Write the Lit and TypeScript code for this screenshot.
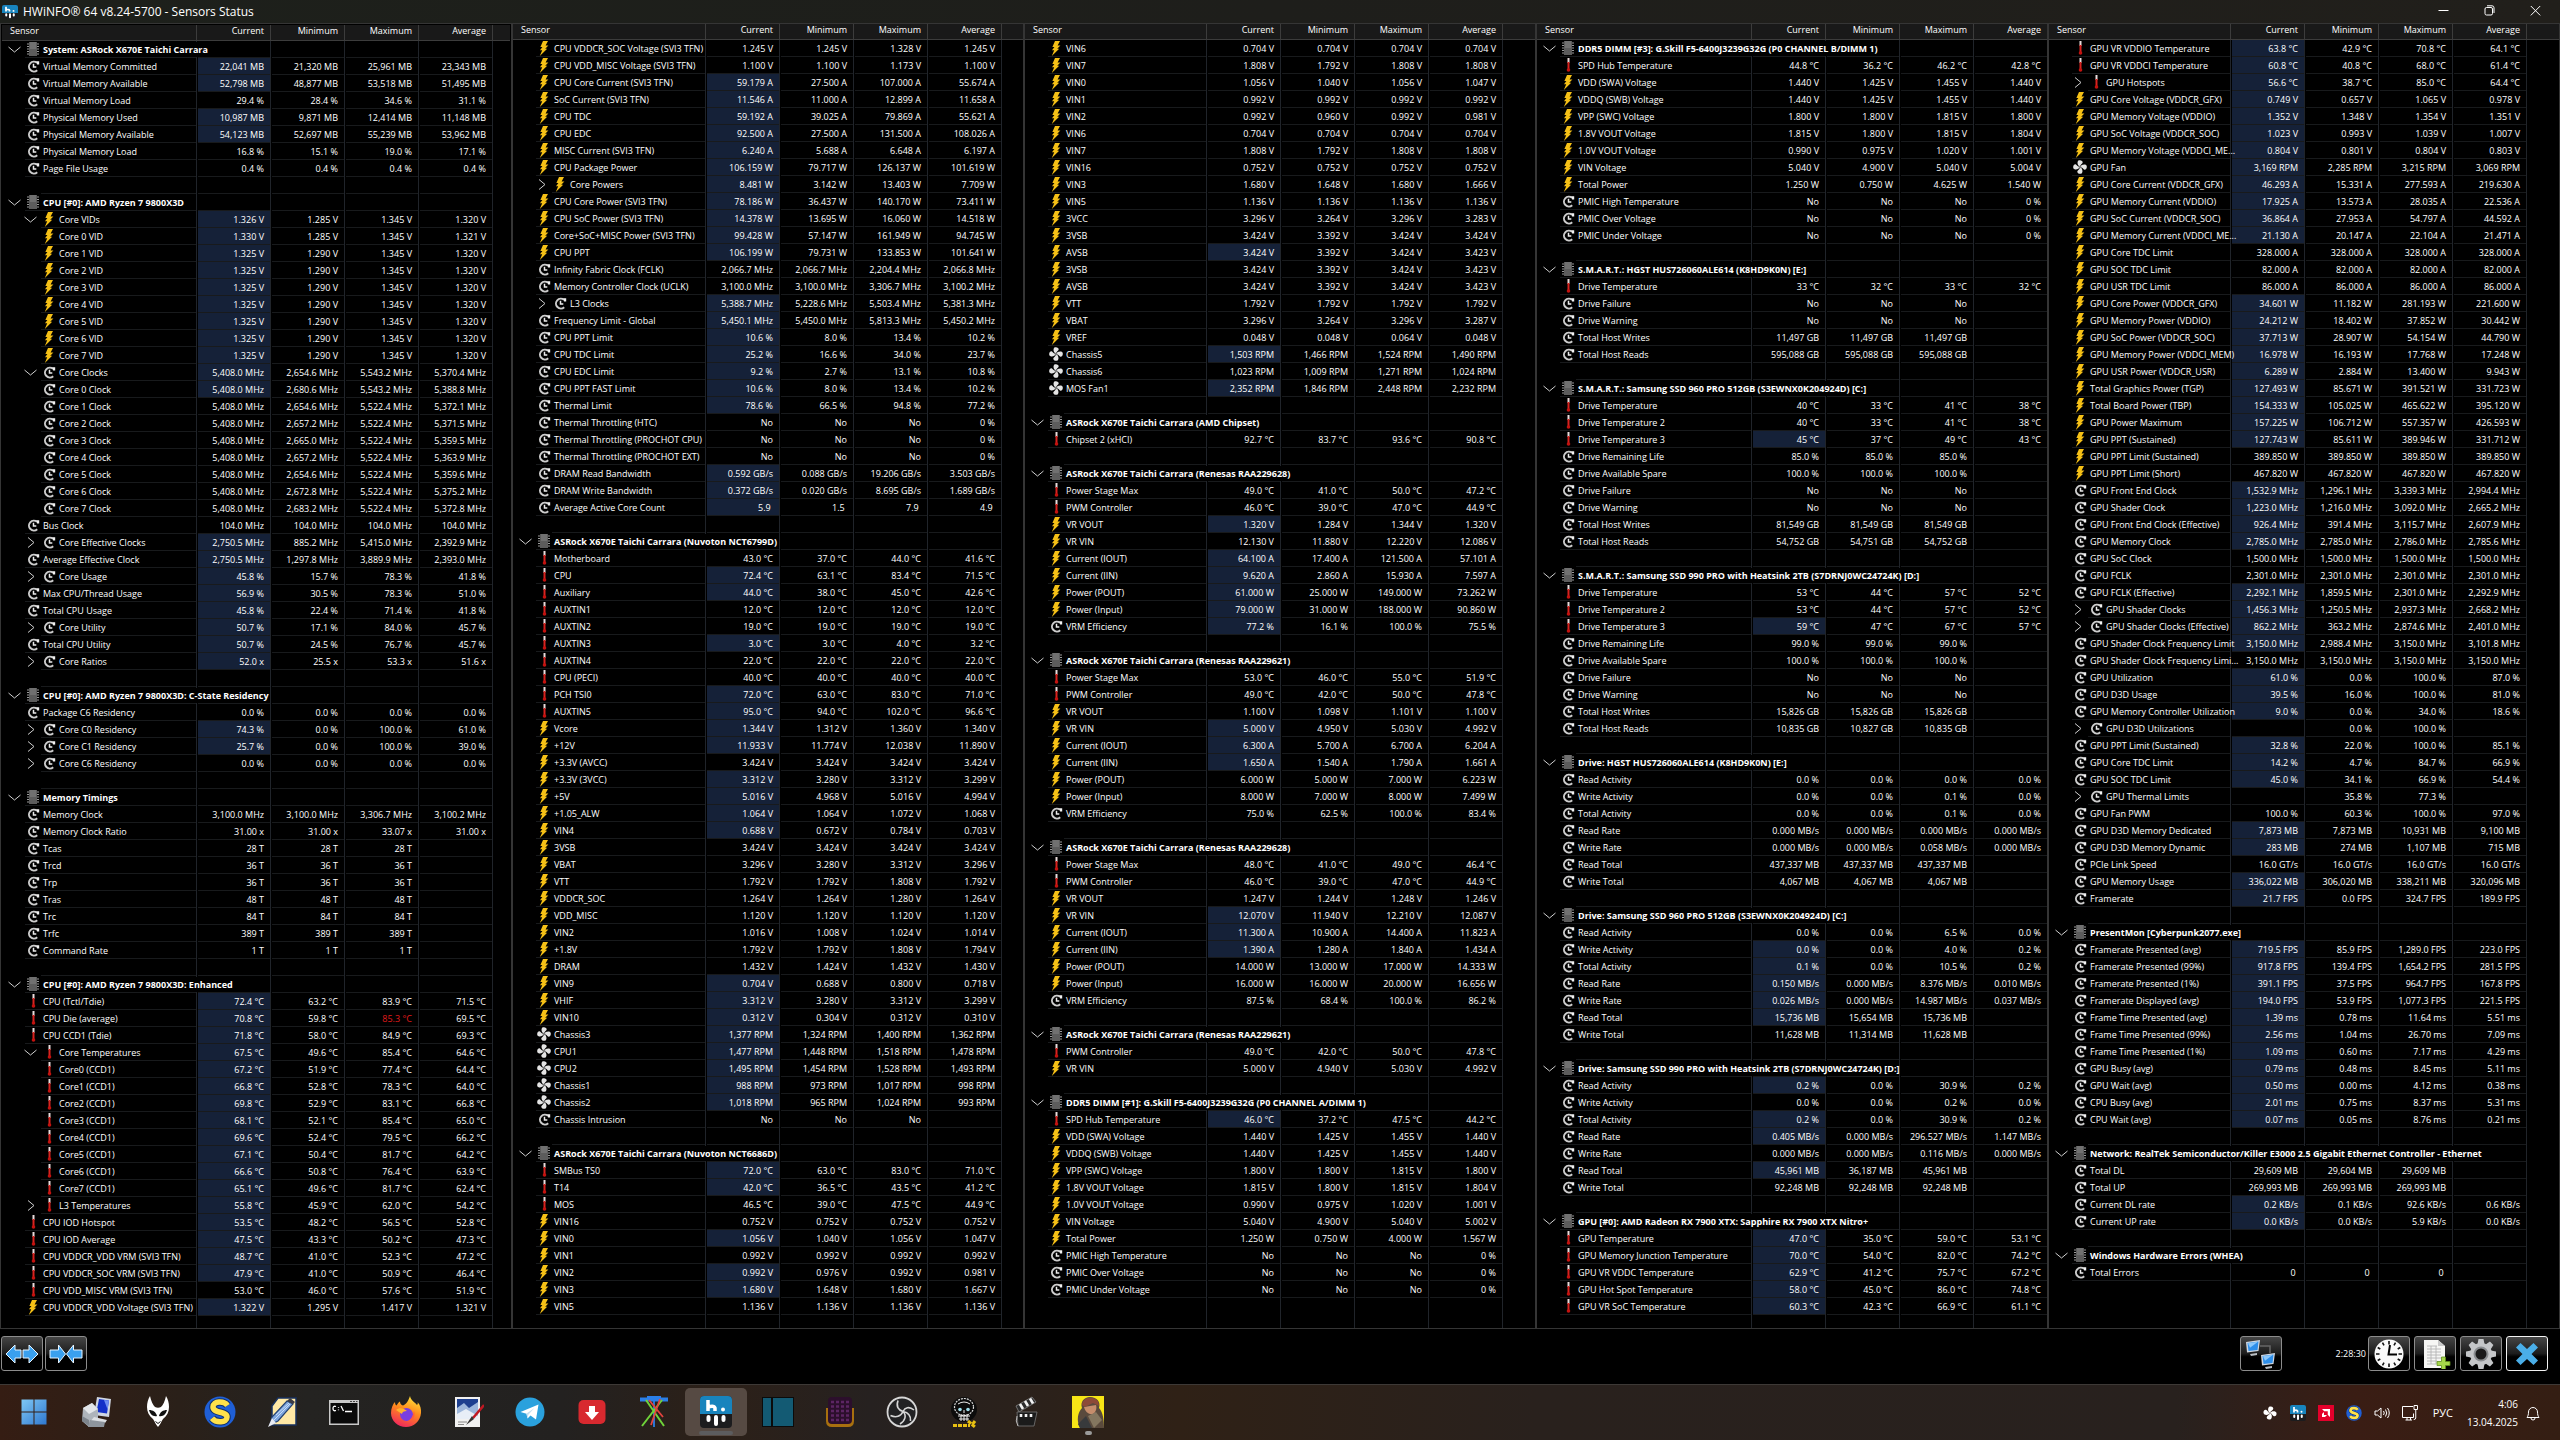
import { LitElement, html, css, svg, nothing, TemplateResult } from "lit";
import { customElement, property } from "lit/decorators.js";
import { classMap } from "lit/directives/class-map.js";

/* ---------------------------------------------------------------- data --
 * One reading per line:  kind|name|current minimum maximum average|unit
 * kind: c clock, b bolt, t thermometer, f fan
 *       * value changed since last poll, > collapsed group, < open group,
 *       - member of a group, ! maximum is over the limit
 * A line that starts with # opens a section.
 */
interface Reading {
  icon: string;
  changed: boolean;
  group: "" | "open" | "closed";
  nested: boolean;
  alert: boolean;
  name: string;
  values: string[];
}
interface Section {
  title: string;
  readings: Reading[];
}

const withUnit = (v: string, unit: string): string => {
  if (v === "-") return "";
  if (v === "No") return v;
  if (v.endsWith("%")) return v.slice(0, -1) + " %";
  return unit ? `${v} ${unit}` : `${v}\u00a0`;
};

const parse = (source: string): Section[] => {
  const out: Section[] = [];
  for (const line of source.trim().split("\n")) {
    if (line.startsWith("#")) {
      out.push({ title: line.slice(1), readings: [] });
      continue;
    }
    if (!out.length) out.push({ title: "", readings: [] });
    const [kind, name, values, unit = ""] = line.split("|");
    out[out.length - 1].readings.push({
      icon: kind[0],
      changed: kind.includes("*"),
      group: kind.includes(">") ? "closed" : kind.includes("<") ? "open" : "",
      nested: /[<>-]/.test(kind),
      alert: kind.includes("!"),
      name,
      values: values.split(" ").map((v) => withUnit(v, unit)),
    });
  }
  return out;
};

const PANELS: { width: number; sections: Section[] }[] = [
  {
    width: 194,
    sections: parse(`
#System: ASRock X670E Taichi Carrara
c*|Virtual Memory Committed|22,041 21,320 25,961 23,343|MB
c*|Virtual Memory Available|52,798 48,877 53,518 51,495|MB
c|Virtual Memory Load|29.4 28.4 34.6 31.1|%
c*|Physical Memory Used|10,987 9,871 12,414 11,148|MB
c*|Physical Memory Available|54,123 52,697 55,239 53,962|MB
c|Physical Memory Load|16.8 15.1 19.0 17.1|%
c|Page File Usage|0.4 0.4 0.4 0.4|%
#CPU [#0]: AMD Ryzen 7 9800X3D
b*<|Core VIDs|1.326 1.285 1.345 1.320|V
b*-|Core 0 VID|1.330 1.285 1.345 1.321|V
b*-|Core 1 VID|1.325 1.290 1.345 1.320|V
b*-|Core 2 VID|1.325 1.290 1.345 1.320|V
b*-|Core 3 VID|1.325 1.290 1.345 1.320|V
b*-|Core 4 VID|1.325 1.290 1.345 1.320|V
b*-|Core 5 VID|1.325 1.290 1.345 1.320|V
b*-|Core 6 VID|1.325 1.290 1.345 1.320|V
b*-|Core 7 VID|1.325 1.290 1.345 1.320|V
c*<|Core Clocks|5,408.0 2,654.6 5,543.2 5,370.4|MHz
c*-|Core 0 Clock|5,408.0 2,680.6 5,543.2 5,388.8|MHz
c-|Core 1 Clock|5,408.0 2,654.6 5,522.4 5,372.1|MHz
c-|Core 2 Clock|5,408.0 2,657.2 5,522.4 5,371.5|MHz
c-|Core 3 Clock|5,408.0 2,665.0 5,522.4 5,359.5|MHz
c-|Core 4 Clock|5,408.0 2,657.2 5,522.4 5,363.9|MHz
c-|Core 5 Clock|5,408.0 2,654.6 5,522.4 5,359.6|MHz
c-|Core 6 Clock|5,408.0 2,672.8 5,522.4 5,375.2|MHz
c-|Core 7 Clock|5,408.0 2,683.2 5,522.4 5,372.8|MHz
c|Bus Clock|104.0 104.0 104.0 104.0|MHz
c*>|Core Effective Clocks|2,750.5 885.2 5,415.0 2,392.9|MHz
c*|Average Effective Clock|2,750.5 1,297.8 3,889.9 2,393.0|MHz
c*>|Core Usage|45.8 15.7 78.3 41.8|%
c*|Max CPU/Thread Usage|56.9 30.5 78.3 51.0|%
c*|Total CPU Usage|45.8 22.4 71.4 41.8|%
c*>|Core Utility|50.7 17.1 84.0 45.7|%
c*|Total CPU Utility|50.7 24.5 76.7 45.7|%
c*>|Core Ratios|52.0 25.5 53.3 51.6|x
#CPU [#0]: AMD Ryzen 7 9800X3D: C-State Residency
c|Package C6 Residency|0.0 0.0 0.0 0.0|%
c*>|Core C0 Residency|74.3 0.0 100.0 61.0|%
c*>|Core C1 Residency|25.7 0.0 100.0 39.0|%
c>|Core C6 Residency|0.0 0.0 0.0 0.0|%
#Memory Timings
c|Memory Clock|3,100.0 3,100.0 3,306.7 3,100.2|MHz
c|Memory Clock Ratio|31.00 31.00 33.07 31.00|x
c|Tcas|28 28 28 -|T
c|Trcd|36 36 36 -|T
c|Trp|36 36 36 -|T
c|Tras|48 48 48 -|T
c|Trc|84 84 84 -|T
c|Trfc|389 389 389 -|T
c|Command Rate|1 1 1 -|T
#CPU [#0]: AMD Ryzen 7 9800X3D: Enhanced
t*|CPU (Tctl/Tdie)|72.4 63.2 83.9 71.5|°C
t*!|CPU Die (average)|70.8 59.8 85.3 69.5|°C
t*|CPU CCD1 (Tdie)|71.8 58.0 84.9 69.3|°C
t*<|Core Temperatures|67.5 49.6 85.4 64.6|°C
t*-|Core0 (CCD1)|67.2 51.9 77.4 64.4|°C
t*-|Core1 (CCD1)|66.8 52.8 78.3 64.0|°C
t*-|Core2 (CCD1)|69.8 52.9 83.1 66.8|°C
t*-|Core3 (CCD1)|68.1 52.1 85.4 65.0|°C
t*-|Core4 (CCD1)|69.6 52.4 79.5 66.2|°C
t*-|Core5 (CCD1)|67.1 50.4 81.7 64.2|°C
t*-|Core6 (CCD1)|66.6 50.8 76.4 63.9|°C
t*-|Core7 (CCD1)|65.1 49.6 81.7 62.4|°C
t*>|L3 Temperatures|55.8 45.9 62.0 54.2|°C
t*|CPU IOD Hotspot|53.5 48.2 56.5 52.8|°C
t*|CPU IOD Average|47.5 43.3 50.2 47.3|°C
t*|CPU VDDCR_VDD VRM (SVI3 TFN)|48.7 41.0 52.3 47.2|°C
t*|CPU VDDCR_SOC VRM (SVI3 TFN)|47.9 41.0 50.9 46.4|°C
t|CPU VDD_MISC VRM (SVI3 TFN)|53.0 46.0 57.6 51.9|°C
b*|CPU VDDCR_VDD Voltage (SVI3 TFN)|1.322 1.295 1.417 1.321|V
`),
  },
  {
    width: 192,
    sections: parse(`
b|CPU VDDCR_SOC Voltage (SVI3 TFN)|1.245 1.245 1.328 1.245|V
b|CPU VDD_MISC Voltage (SVI3 TFN)|1.100 1.100 1.173 1.100|V
b*|CPU Core Current (SVI3 TFN)|59.179 27.500 107.000 55.674|A
b*|SoC Current (SVI3 TFN)|11.546 11.000 12.899 11.658|A
b*|CPU TDC|59.192 39.025 79.869 55.621|A
b*|CPU EDC|92.500 27.500 131.500 108.026|A
b*|MISC Current (SVI3 TFN)|6.240 5.688 6.648 6.197|A
b*|CPU Package Power|106.159 79.717 126.137 101.619|W
b*>|Core Powers|8.481 3.142 13.403 7.709|W
b*|CPU Core Power (SVI3 TFN)|78.186 36.437 140.170 73.411|W
b*|CPU SoC Power (SVI3 TFN)|14.378 13.695 16.060 14.518|W
b*|Core+SoC+MISC Power (SVI3 TFN)|99.428 57.147 161.949 94.745|W
b*|CPU PPT|106.199 79.731 133.853 101.641|W
c|Infinity Fabric Clock (FCLK)|2,066.7 2,066.7 2,204.4 2,066.8|MHz
c|Memory Controller Clock (UCLK)|3,100.0 3,100.0 3,306.7 3,100.2|MHz
c*>|L3 Clocks|5,388.7 5,228.6 5,503.4 5,381.3|MHz
c*|Frequency Limit - Global|5,450.1 5,450.0 5,813.3 5,450.2|MHz
c*|CPU PPT Limit|10.6 8.0 13.4 10.2|%
c*|CPU TDC Limit|25.2 16.6 34.0 23.7|%
c*|CPU EDC Limit|9.2 2.7 13.1 10.8|%
c*|CPU PPT FAST Limit|10.6 8.0 13.4 10.2|%
c*|Thermal Limit|78.6 66.5 94.8 77.2|%
c|Thermal Throttling (HTC)|No No No 0%
c|Thermal Throttling (PROCHOT CPU)|No No No 0%
c|Thermal Throttling (PROCHOT EXT)|No No No 0%
c*|DRAM Read Bandwidth|0.592 0.088 19.206 3.503|GB/s
c*|DRAM Write Bandwidth|0.372 0.020 8.695 1.689|GB/s
c*|Average Active Core Count|5.9 1.5 7.9 4.9
#ASRock X670E Taichi Carrara (Nuvoton NCT6799D)
t|Motherboard|43.0 37.0 44.0 41.6|°C
t*|CPU|72.4 63.1 83.4 71.5|°C
t*|Auxiliary|44.0 38.0 45.0 42.6|°C
t|AUXTIN1|12.0 12.0 12.0 12.0|°C
t|AUXTIN2|19.0 19.0 19.0 19.0|°C
t*|AUXTIN3|3.0 3.0 4.0 3.2|°C
t|AUXTIN4|22.0 22.0 22.0 22.0|°C
t|CPU (PECI)|40.0 40.0 40.0 40.0|°C
t*|PCH TSI0|72.0 63.0 83.0 71.0|°C
t*|AUXTIN5|95.0 94.0 102.0 96.6|°C
b*|Vcore|1.344 1.312 1.360 1.340|V
b*|+12V|11.933 11.774 12.038 11.890|V
b|+3.3V (AVCC)|3.424 3.424 3.424 3.424|V
b*|+3.3V (3VCC)|3.312 3.280 3.312 3.299|V
b*|+5V|5.016 4.968 5.016 4.994|V
b*|+1.05_ALW|1.064 1.064 1.072 1.068|V
b*|VIN4|0.688 0.672 0.784 0.703|V
b|3VSB|3.424 3.424 3.424 3.424|V
b|VBAT|3.296 3.280 3.312 3.296|V
b|VTT|1.792 1.792 1.808 1.792|V
b|VDDCR_SOC|1.264 1.264 1.280 1.264|V
b|VDD_MISC|1.120 1.120 1.120 1.120|V
b|VIN2|1.016 1.008 1.024 1.014|V
b|+1.8V|1.792 1.792 1.808 1.794|V
b|DRAM|1.432 1.424 1.432 1.430|V
b*|VIN9|0.704 0.688 0.800 0.718|V
b*|VHIF|3.312 3.280 3.312 3.299|V
b*|VIN10|0.312 0.304 0.312 0.310|V
f*|Chassis3|1,377 1,324 1,400 1,362|RPM
f*|CPU1|1,477 1,448 1,518 1,478|RPM
f*|CPU2|1,495 1,454 1,528 1,493|RPM
f*|Chassis1|988 973 1,017 998|RPM
f*|Chassis2|1,018 965 1,024 993|RPM
c|Chassis Intrusion|No No No -
#ASRock X670E Taichi Carrara (Nuvoton NCT6686D)
t*|SMBus TS0|72.0 63.0 83.0 71.0|°C
t*|T14|42.0 36.5 43.5 41.2|°C
t|MOS|46.5 39.0 47.5 44.9|°C
b|VIN16|0.752 0.752 0.752 0.752|V
b*|VIN0|1.056 1.040 1.056 1.047|V
b|VIN1|0.992 0.992 0.992 0.992|V
b*|VIN2|0.992 0.976 0.992 0.981|V
b*|VIN3|1.680 1.648 1.680 1.667|V
b|VIN5|1.136 1.136 1.136 1.136|V
`),
  },
  {
    width: 181,
    sections: parse(`
b|VIN6|0.704 0.704 0.704 0.704|V
b|VIN7|1.808 1.792 1.808 1.808|V
b|VIN0|1.056 1.040 1.056 1.047|V
b|VIN1|0.992 0.992 0.992 0.992|V
b|VIN2|0.992 0.960 0.992 0.981|V
b|VIN6|0.704 0.704 0.704 0.704|V
b|VIN7|1.808 1.792 1.808 1.808|V
b|VIN16|0.752 0.752 0.752 0.752|V
b|VIN3|1.680 1.648 1.680 1.666|V
b|VIN5|1.136 1.136 1.136 1.136|V
b|3VCC|3.296 3.264 3.296 3.283|V
b|3VSB|3.424 3.392 3.424 3.424|V
b*|AVSB|3.424 3.392 3.424 3.423|V
b|3VSB|3.424 3.392 3.424 3.423|V
b|AVSB|3.424 3.392 3.424 3.423|V
b|VTT|1.792 1.792 1.792 1.792|V
b|VBAT|3.296 3.264 3.296 3.287|V
b|VREF|0.048 0.048 0.064 0.048|V
f*|Chassis5|1,503 1,466 1,524 1,490|RPM
f|Chassis6|1,023 1,009 1,271 1,024|RPM
f*|MOS Fan1|2,352 1,846 2,448 2,232|RPM
#ASRock X670E Taichi Carrara (AMD Chipset)
t|Chipset 2 (xHCI)|92.7 83.7 93.6 90.8|°C
#ASRock X670E Taichi Carrara (Renesas RAA229628)
t|Power Stage Max|49.0 41.0 50.0 47.2|°C
t|PWM Controller|46.0 39.0 47.0 44.9|°C
b*|VR VOUT|1.320 1.284 1.344 1.320|V
b|VR VIN|12.130 11.880 12.220 12.086|V
b*|Current (IOUT)|64.100 17.400 121.500 57.101|A
b*|Current (IIN)|9.620 2.860 15.930 7.597|A
b*|Power (POUT)|61.000 25.000 149.000 73.262|W
b*|Power (Input)|79.000 31.000 188.000 90.860|W
c*|VRM Efficiency|77.2 16.1 100.0 75.5|%
#ASRock X670E Taichi Carrara (Renesas RAA229621)
t|Power Stage Max|53.0 46.0 55.0 51.9|°C
t|PWM Controller|49.0 42.0 50.0 47.8|°C
b|VR VOUT|1.100 1.098 1.101 1.100|V
b*|VR VIN|5.000 4.950 5.030 4.992|V
b*|Current (IOUT)|6.300 5.700 6.700 6.204|A
b*|Current (IIN)|1.650 1.540 1.790 1.661|A
b|Power (POUT)|6.000 5.000 7.000 6.223|W
b|Power (Input)|8.000 7.000 8.000 7.499|W
c|VRM Efficiency|75.0 62.5 100.0 83.4|%
#ASRock X670E Taichi Carrara (Renesas RAA229628)
t|Power Stage Max|48.0 41.0 49.0 46.4|°C
t|PWM Controller|46.0 39.0 47.0 44.9|°C
b|VR VOUT|1.247 1.244 1.248 1.246|V
b*|VR VIN|12.070 11.940 12.210 12.087|V
b*|Current (IOUT)|11.300 10.900 14.400 11.823|A
b*|Current (IIN)|1.390 1.280 1.840 1.434|A
b|Power (POUT)|14.000 13.000 17.000 14.333|W
b|Power (Input)|16.000 16.000 20.000 16.656|W
c|VRM Efficiency|87.5 68.4 100.0 86.2|%
#ASRock X670E Taichi Carrara (Renesas RAA229621)
t|PWM Controller|49.0 42.0 50.0 47.8|°C
b|VR VIN|5.000 4.940 5.030 4.992|V
#DDR5 DIMM [#1]: G.Skill F5-6400J3239G32G (P0 CHANNEL A/DIMM 1)
t*|SPD Hub Temperature|46.0 37.2 47.5 44.2|°C
b|VDD (SWA) Voltage|1.440 1.425 1.455 1.440|V
b|VDDQ (SWB) Voltage|1.440 1.425 1.455 1.440|V
b|VPP (SWC) Voltage|1.800 1.800 1.815 1.800|V
b|1.8V VOUT Voltage|1.815 1.800 1.815 1.804|V
b|1.0V VOUT Voltage|0.990 0.975 1.020 1.001|V
b|VIN Voltage|5.040 4.900 5.040 5.002|V
b|Total Power|1.250 0.750 4.000 1.567|W
c|PMIC High Temperature|No No No 0%
c|PMIC Over Voltage|No No No 0%
c|PMIC Under Voltage|No No No 0%
`),
  },
  {
    width: 214,
    sections: parse(`
#DDR5 DIMM [#3]: G.Skill F5-6400J3239G32G (P0 CHANNEL B/DIMM 1)
t|SPD Hub Temperature|44.8 36.2 46.2 42.8|°C
b|VDD (SWA) Voltage|1.440 1.425 1.455 1.440|V
b|VDDQ (SWB) Voltage|1.440 1.425 1.455 1.440|V
b|VPP (SWC) Voltage|1.800 1.800 1.815 1.800|V
b|1.8V VOUT Voltage|1.815 1.800 1.815 1.804|V
b|1.0V VOUT Voltage|0.990 0.975 1.020 1.001|V
b|VIN Voltage|5.040 4.900 5.040 5.004|V
b|Total Power|1.250 0.750 4.625 1.540|W
c|PMIC High Temperature|No No No 0%
c|PMIC Over Voltage|No No No 0%
c|PMIC Under Voltage|No No No 0%
#S.M.A.R.T.: HGST HUS726060ALE614 (K8HD9K0N) [E:]
t|Drive Temperature|33 32 33 32|°C
c|Drive Failure|No No No -
c|Drive Warning|No No No -
c|Total Host Writes|11,497 11,497 11,497 -|GB
c|Total Host Reads|595,088 595,088 595,088 -|GB
#S.M.A.R.T.: Samsung SSD 960 PRO 512GB (S3EWNX0K204924D) [C:]
t|Drive Temperature|40 33 41 38|°C
t|Drive Temperature 2|40 33 41 38|°C
t*|Drive Temperature 3|45 37 49 43|°C
c|Drive Remaining Life|85.0 85.0 85.0 -|%
c|Drive Available Spare|100.0 100.0 100.0 -|%
c|Drive Failure|No No No -
c|Drive Warning|No No No -
c|Total Host Writes|81,549 81,549 81,549 -|GB
c|Total Host Reads|54,752 54,751 54,752 -|GB
#S.M.A.R.T.: Samsung SSD 990 PRO with Heatsink 2TB (S7DRNJ0WC24724K) [D:]
t|Drive Temperature|53 44 57 52|°C
t|Drive Temperature 2|53 44 57 52|°C
t*|Drive Temperature 3|59 47 67 57|°C
c|Drive Remaining Life|99.0 99.0 99.0 -|%
c|Drive Available Spare|100.0 100.0 100.0 -|%
c|Drive Failure|No No No -
c|Drive Warning|No No No -
c|Total Host Writes|15,826 15,826 15,826 -|GB
c|Total Host Reads|10,835 10,827 10,835 -|GB
#Drive: HGST HUS726060ALE614 (K8HD9K0N) [E:]
c|Read Activity|0.0 0.0 0.0 0.0|%
c|Write Activity|0.0 0.0 0.1 0.0|%
c|Total Activity|0.0 0.0 0.1 0.0|%
c|Read Rate|0.000 0.000 0.000 0.000|MB/s
c|Write Rate|0.000 0.000 0.058 0.000|MB/s
c|Read Total|437,337 437,337 437,337 -|MB
c|Write Total|4,067 4,067 4,067 -|MB
#Drive: Samsung SSD 960 PRO 512GB (S3EWNX0K204924D) [C:]
c|Read Activity|0.0 0.0 6.5 0.0|%
c*|Write Activity|0.0 0.0 4.0 0.2|%
c*|Total Activity|0.1 0.0 10.5 0.2|%
c*|Read Rate|0.150 0.000 8.376 0.010|MB/s
c*|Write Rate|0.026 0.000 14.987 0.037|MB/s
c*|Read Total|15,736 15,654 15,736 -|MB
c|Write Total|11,628 11,314 11,628 -|MB
#Drive: Samsung SSD 990 PRO with Heatsink 2TB (S7DRNJ0WC24724K) [D:]
c*|Read Activity|0.2 0.0 30.9 0.2|%
c|Write Activity|0.0 0.0 0.2 0.0|%
c*|Total Activity|0.2 0.0 30.9 0.2|%
c*|Read Rate|0.405 0.000 296.527 1.147|MB/s
c|Write Rate|0.000 0.000 0.116 0.000|MB/s
c*|Read Total|45,961 36,187 45,961 -|MB
c|Write Total|92,248 92,248 92,248 -|MB
#GPU [#0]: AMD Radeon RX 7900 XTX: Sapphire RX 7900 XTX Nitro+
t*|GPU Temperature|47.0 35.0 59.0 53.1|°C
t*|GPU Memory Junction Temperature|70.0 54.0 82.0 74.2|°C
t*|GPU VR VDDC Temperature|62.9 41.2 75.7 67.2|°C
t*|GPU Hot Spot Temperature|58.0 45.0 86.0 74.8|°C
t*|GPU VR SoC Temperature|60.3 42.3 66.9 61.1|°C
`),
  },
  {
    width: 181,
    sections: parse(`
t*|GPU VR VDDIO Temperature|63.8 42.9 70.8 64.1|°C
t*|GPU VR VDDCI Temperature|60.8 40.8 68.0 61.4|°C
t*>|GPU Hotspots|56.6 38.7 85.0 64.4|°C
b*|GPU Core Voltage (VDDCR_GFX)|0.749 0.657 1.065 0.978|V
b*|GPU Memory Voltage (VDDIO)|1.352 1.348 1.354 1.351|V
b*|GPU SoC Voltage (VDDCR_SOC)|1.023 0.993 1.039 1.007|V
b*|GPU Memory Voltage (VDDCI_ME...|0.804 0.801 0.804 0.803|V
f*|GPU Fan|3,169 2,285 3,215 3,069|RPM
b*|GPU Core Current (VDDCR_GFX)|46.293 15.331 277.593 219.630|A
b*|GPU Memory Current (VDDIO)|17.925 13.573 28.035 22.536|A
b*|GPU SoC Current (VDDCR_SOC)|36.864 27.953 54.797 44.592|A
b*|GPU Memory Current (VDDCI_ME...|21.130 20.147 22.104 21.471|A
b|GPU Core TDC Limit|328.000 328.000 328.000 328.000|A
b|GPU SOC TDC Limit|82.000 82.000 82.000 82.000|A
b|GPU USR TDC Limit|86.000 86.000 86.000 86.000|A
b*|GPU Core Power (VDDCR_GFX)|34.601 11.182 281.193 221.600|W
b*|GPU Memory Power (VDDIO)|24.212 18.402 37.852 30.442|W
b*|GPU SoC Power (VDDCR_SOC)|37.713 28.907 54.154 44.790|W
b*|GPU Memory Power (VDDCI_MEM)|16.978 16.193 17.768 17.248|W
b*|GPU USR Power (VDDCR_USR)|6.289 2.884 13.400 9.943|W
b*|Total Graphics Power (TGP)|127.493 85.671 391.521 331.723|W
b*|Total Board Power (TBP)|154.333 105.025 465.622 395.120|W
b*|GPU Power Maximum|157.225 106.712 557.357 426.593|W
b*|GPU PPT (Sustained)|127.743 85.611 389.946 331.712|W
b|GPU PPT Limit (Sustained)|389.850 389.850 389.850 389.850|W
b|GPU PPT Limit (Short)|467.820 467.820 467.820 467.820|W
c*|GPU Front End Clock|1,532.9 1,296.1 3,339.3 2,994.4|MHz
c*|GPU Shader Clock|1,223.0 1,216.0 3,092.0 2,665.2|MHz
c*|GPU Front End Clock (Effective)|926.4 391.4 3,115.7 2,607.9|MHz
c*|GPU Memory Clock|2,785.0 2,785.0 2,786.0 2,785.6|MHz
c|GPU SoC Clock|1,500.0 1,500.0 1,500.0 1,500.0|MHz
c|GPU FCLK|2,301.0 2,301.0 2,301.0 2,301.0|MHz
c*|GPU FCLK (Effective)|2,292.1 1,859.5 2,301.0 2,292.9|MHz
c*>|GPU Shader Clocks|1,456.3 1,250.5 2,937.3 2,668.2|MHz
c*>|GPU Shader Clocks (Effective)|862.2 363.2 2,874.6 2,401.0|MHz
c*|GPU Shader Clock Frequency Limit|3,150.0 2,988.4 3,150.0 3,101.8|MHz
c|GPU Shader Clock Frequency Limi...|3,150.0 3,150.0 3,150.0 3,150.0|MHz
c*|GPU Utilization|61.0 0.0 100.0 87.0|%
c*|GPU D3D Usage|39.5 16.0 100.0 81.0|%
c*|GPU Memory Controller Utilization|9.0 0.0 34.0 18.6|%
c>|GPU D3D Utilizations|- 0.0 100.0 -|%
c*|GPU PPT Limit (Sustained)|32.8 22.0 100.0 85.1|%
c*|GPU Core TDC Limit|14.2 4.7 84.7 66.9|%
c*|GPU SOC TDC Limit|45.0 34.1 66.9 54.4|%
c>|GPU Thermal Limits|- 35.8 77.3 -|%
c|GPU Fan PWM|100.0 60.3 100.0 97.0|%
c*|GPU D3D Memory Dedicated|7,873 7,873 10,931 9,100|MB
c*|GPU D3D Memory Dynamic|283 274 1,107 715|MB
c|PCIe Link Speed|16.0 16.0 16.0 16.0|GT/s
c*|GPU Memory Usage|336,022 306,020 338,211 320,096|MB
c*|Framerate|21.7 0.0 324.7 189.9|FPS
#PresentMon [Cyberpunk2077.exe]
c*|Framerate Presented (avg)|719.5 85.9 1,289.0 223.0|FPS
c*|Framerate Presented (99%)|917.8 139.4 1,654.2 281.5|FPS
c*|Framerate Presented (1%)|391.1 37.5 964.7 167.8|FPS
c*|Framerate Displayed (avg)|194.0 53.9 1,077.3 221.5|FPS
c*|Frame Time Presented (avg)|1.39 0.78 11.64 5.51|ms
c*|Frame Time Presented (99%)|2.56 1.04 26.70 7.09|ms
c*|Frame Time Presented (1%)|1.09 0.60 7.17 4.29|ms
c*|GPU Busy (avg)|0.79 0.48 8.45 5.11|ms
c*|GPU Wait (avg)|0.50 0.00 4.12 0.38|ms
c*|CPU Busy (avg)|2.01 0.75 8.37 5.31|ms
c*|CPU Wait (avg)|0.07 0.05 8.76 0.21|ms
#Network: RealTek Semiconductor/Killer E3000 2.5 Gigabit Ethernet Controller - Ethernet
c|Total DL|29,609 29,604 29,609 -|MB
c|Total UP|269,993 269,993 269,993 -|MB
c*|Current DL rate|0.2 0.1 92.6 0.6|KB/s
c*|Current UP rate|0.0 0.0 5.9 0.0|KB/s
#Windows Hardware Errors (WHEA)
c|Total Errors|0 0 0 -
`),
  },
];

/* --------------------------------------------------------------- icons -- */
const ROW_ICONS: Record<string, TemplateResult> = {
  c: html`<svg width="13" height="13" viewBox="0 0 13 13">
    <path d="M10 2.800A4.900 4.900 0 1 0 10.200 10.200" fill="none" stroke="#cdcdcd" stroke-width="2" />
    <path d="M9.300 1.200h2.900v3.200h-2.200z" fill="#f2f2f2" />
    <path d="M6.500 3.800v3.300h2.800" fill="none" stroke="#ececec" stroke-width="1.500" />
  </svg>`,
  b: html`<svg width="10" height="15" viewBox="0 0 10 15">
    <path d="M4 0h5L6.600 4.400H9.400L6.200 7.800H8.200L.8 15 3.200 9.200H1L3.400 6H1.400z" fill="#f5c016" />
  </svg>`,
  t: html`<svg width="5" height="14" viewBox="0 0 5 14">
    <rect x="1.500" y="0" width="2" height="5" fill="#e9dcdc" />
    <rect x="1.500" y="4" width="2" height="8" fill="#d8231f" />
    <circle cx="2.500" cy="12" r="1.800" fill="#c3120f" />
  </svg>`,
  f: html`<svg width="14" height="14" viewBox="0 0 14 14">
    <g fill="#e4e4e4">
      <path d="M7 7C4 5.500 3.800 1 6 .3 8.500-.3 10.300 1.600 9.500 3 8.800 4.200 7.300 4.500 7 7z" />
      <path d="M7 7C8.500 4 13 3.800 13.700 6c.6 2.500-1.300 4.300-2.700 3.500C9.800 8.800 9.500 7.300 7 7z" />
      <path d="M7 7c3 1.500 3.200 6 1 6.700-2.500.6-4.300-1.300-3.500-2.700C5.200 9.800 6.700 9.500 7 7z" />
      <path d="M7 7C5.500 10 1 10.200.3 8-.3 5.500 1.600 3.700 3 4.500 4.200 5.200 4.500 6.700 7 7z" />
    </g>
    <circle cx="7" cy="7" r="1.300" fill="#777" />
  </svg>`,
  chip: html`<svg width="12" height="14" viewBox="0 0 12 14">
    <path d="M0 2h12M0 4.500h12M0 7h12M0 9.500h12M0 12h12" stroke="#9a9a9a" stroke-width="1" />
    <rect x="2" y="0" width="8" height="14" fill="#5c5c5c" />
    <rect x="3" y="0" width="6" height="7" fill="#707070" />
  </svg>`,
};

const chevron = (open: boolean) => html`<svg width="13" height="13" viewBox="0 0 13 13">
  <path d=${open ? "M.5 4l6 5 6-5" : "M4 1.500l6 5-6 5"} fill="none" stroke="#d0d0d0" stroke-width="1" />
</svg>`;

const hwinfoMark = svg`
  <rect width="32" height="32" rx="4" fill="#1c1c1e" />
  <path d="M0 18V4a4 4 0 0 1 4-4h24a4 4 0 0 1 4 4v14z" fill="#1884bd" />
  <path d="M8 4v11M15 15v-3q-1-3-7-1" stroke="#fff" stroke-width="3.500" fill="none" />
  <circle cx="23" cy="13.500" r="2" fill="#fff" />
  <path d="M8.500 21v3M16 21v7M23.500 21v3" stroke="#fff" stroke-width="4" stroke-linecap="round" />`;

const sMark = svg`
  <circle cx="16" cy="16" r="15.500" fill="#1f5fd6" />
  <path d="M23.500 9.500C20 4.500 9 4.800 9 11c0 6.500 14 4 14 10 0 6-11 6.200-15 1.200" fill="none" stroke="#10306e" stroke-width="7.500" />
  <path d="M23.500 9.500C20 4.500 9 4.800 9 11c0 6.500 14 4 14 10 0 6-11 6.200-15 1.200" fill="none" stroke="#ffe14a" stroke-width="5.500" />`;

interface App {
  label: string;
  art: TemplateResult;
  state?: "active" | "running";
}

const APPS: App[] = [
  {
    label: "Start",
    art: svg`<defs><linearGradient id="win" x1="0" y1="0" x2="1" y2="1"><stop offset="0" stop-color="#7fc8f5" /><stop offset="1" stop-color="#2f78d0" /></linearGradient></defs>
      <path d="M3.500 3.500h12v12h-12zM16.500 3.500h12v12h-12zM3.500 16.500h12v12h-12zM16.500 16.500h12v12h-12z" fill="url(#win)" />`,
  },
  {
    label: "Computer",
    art: svg`<path d="M17 1l14 2-2 18-15-2z" fill="#cfd6e2" /><path d="M19 3l10 1.500-2 13-10.500-1.500z" fill="#1330c8" /><path d="M24 4l5 .6-1.400 9z" fill="#6d8df2" />
      <path d="M3 12l9-5 6 6v10l-9 8-7-6z" fill="#aeb4bb" /><path d="M3 12l9-5 6 6-9 5z" fill="#e2e5e8" /><path d="M2 20l7 4v6l-7-5z" fill="#7d848c" /><path d="M14 21l13 3-2 3-15-1z" fill="#dcdfe3" /><path d="M10 24l15 2-1 5H8z" fill="#8e959d" />`,
  },
  {
    label: "Player",
    art: svg`<path d="M16 31c-2-2-3-5-5-8-4-3-6-7-6-12 0-4 1-8 3-11 1 5 3 9 5 11 2 1 4 1 6 0 2-2 4-6 5-11 2 3 3 7 3 11 0 5-2 9-6 12-2 3-3 6-5 8z" fill="#fff" />
      <path d="M7 14c4 0 7 2 8 6-4 1-7-2-8-6zM25 14c-4 0-7 2-8 6 4 1 7-2 8-6z" fill="#111" /><path d="M13.500 25.500l2.500 2 2.500-2" stroke="#111" fill="none" />`,
  },
  { label: "S Manager", art: sMark },
  {
    label: "Notes",
    art: svg`<path d="M12 2h18v27H6V10z" fill="#ffe9a6" stroke="#17315f" stroke-width="1.500" /><path d="M21 5l6 3-15 17-8 4 2-8z" fill="#7ea6de" stroke="#23406f" stroke-width="1.200" />
      <path d="M10 19l13-12M8 24l16-16" stroke="#c8dcf7" /><path d="M2 31l4-9 4 5z" fill="#e9ecf4" /><path d="M21 5l3-3 5 4-2 2z" fill="#3c3c44" />`,
  },
  {
    label: "Terminal",
    art: svg`<rect x="1" y="4" width="30" height="25" fill="#c9c9c9" /><rect x="2.500" y="7" width="27" height="20.500" fill="#0a0a0a" /><path d="M22 5.500h2M25 5.500h2M28 5.500h1.500" stroke="#444" />
      <path d="M8 10.500q-3-1-3 2t3 2M10.500 11v.8M10.500 13.500v.8M13 10l2.500 5M17 15.500h7" stroke="#fff" stroke-width="1.300" fill="none" />`,
  },
  {
    label: "Browser",
    art: svg`<defs><linearGradient id="ff" x1=".7" y1="0" x2=".3" y2="1"><stop offset="0" stop-color="#ffe23a" /><stop offset=".45" stop-color="#ff8a1c" /><stop offset="1" stop-color="#f0245f" /></linearGradient></defs>
      <path d="M20 0c1 5 5 6 7 9 1-1 1-2 .5-3 3 3 3.800 7 3.500 11-.7 8-7 14-15 14S1 25 1 17c0-5 2-9 4-11 0 2 .5 3 1.500 3.500C8 7 9 6 10 5.500c0 2 1 3.500 3 4 3-1 5-4 7-9.500z" fill="url(#ff)" />
      <circle cx="16.500" cy="18.500" r="6.500" fill="#7a3ee0" /><path d="M6 14c3-3 8-2 11 1-3 0-5 1-5 3-2-1-4-3-6-4z" fill="#ffb22e" /><path d="M24 15c2 6-2 11-8 11 5-2 7-6 8-11z" fill="#ff5a3c" />`,
  },
  {
    label: "Editor",
    art: svg`<rect x="3" y="1" width="25" height="30" fill="#f1f1f1" /><rect x="5" y="3" width="21" height="20" fill="#1d3f8f" /><path d="M5 12l7-5 5 5 9-6v17H5z" fill="#9db7dc" /><path d="M5 18l9-5 12 7v3H5z" fill="#e8eef7" />
      <path d="M32 9L21 22" stroke="#c01822" stroke-width="2.500" /><path d="M20 20l-6 9 8-6z" fill="#333" /><path d="M6 26h9M6 28.500h6" stroke="#888" />`,
  },
  {
    label: "Messenger",
    art: svg`<circle cx="16" cy="16" r="14.500" fill="#2aa1dd" /><path d="M6.500 16L24.500 8.500 22 23.500l-5.500-4-3 3-1-4.800z" fill="#fff" /><path d="M12.500 17.500L20.500 12l-6 6.500-1.200 3.700z" fill="#c3dff0" />`,
  },
  {
    label: "Downloader",
    art: svg`<rect x="2.500" y="4" width="27" height="24" rx="5" fill="#d8292f" /><path d="M13 10h6v6h4l-7 8-7-8h4z" fill="#fff" />`,
  },
  {
    label: "Graph",
    art: svg`<path d="M2 3.500h28M9 1.500h14" stroke="#2b7fe8" stroke-width="4" /><path d="M16 2v29" stroke="#2b7fe8" stroke-width="1.800" />
      <path d="M8 4l18 26M24 4L4 30" stroke="#6fd43a" stroke-width="2" /><path d="M11 4l14 17M22 3l-9 26" stroke="#e2433e" stroke-width="1.800" />`,
  },
  { label: "HWiNFO", art: hwinfoMark, state: "active" },
  {
    label: "File manager",
    art: svg`<rect x="0" y="1" width="32" height="30" fill="#0b0b0b" /><rect x="1" y="2" width="8" height="28" fill="#135a73" /><rect x="11" y="2" width="20" height="28" fill="#135a73" />`,
  },
  {
    label: "Calculator",
    art: svg`<path d="M2 12v13q0 6 6 6h16q6 0 6-6V12z" fill="#a8700f" /><rect x="4" y="1" width="24" height="27" rx="4" fill="#2c0f2c" />
      <path d="M7 6h18M7 10.500h18M7 15h18M7 19.500h18M7 24h18" stroke="#5c2563" stroke-width="2.600" stroke-dasharray="3 2" />`,
  },
  {
    label: "Recorder",
    art: svg`<circle cx="16" cy="16" r="14.500" fill="#222224" stroke="#d6d6d6" stroke-width="1.800" />
      <path d="M12 4.500c-2 6 0 9.500 5 11 5 1 8 4.500 7.500 9.500M28 14c-5-4-9-2.500-11 1.500-2 5-7 6.500-12.500 4M17 15.500c4 4 2 9.500-3 12.500" fill="none" stroke="#d6d6d6" stroke-width="1.600" />`,
  },
  {
    label: "Skull",
    art: svg`<ellipse cx="16" cy="13.500" rx="13" ry="12.500" fill="#0c0c0c" /><ellipse cx="16" cy="11" rx="9.500" ry="8.500" fill="none" stroke="#ddd" stroke-width="1.200" stroke-dasharray="2 1" />
      <circle cx="12" cy="13.500" r="1.800" fill="#9fe0ee" /><circle cx="20" cy="13.500" r="1.800" fill="#9fe0ee" /><path d="M10 8q6-4 12 0M16 14v3M10 20h12M11 23h10M13 18v7M16 18v7M19 18v7" stroke="#eee" stroke-width="1" fill="none" />
      <path d="M5 29.500h17M20 25l7 6M27 25l-3 4" stroke="#e8c012" stroke-width="3" stroke-dasharray="4 1" />`,
  },
  {
    label: "Clapper",
    art: svg`<path d="M6 10L22 1l4 5L9 16z" fill="#2b2b2b" stroke="#888" stroke-width=".8" /><path d="M10 8l3 5M15 5l3 5M20 2.500l3 5" stroke="#f2f2f2" stroke-width="2.600" />
      <path d="M7 16h20l-3 14H8z" fill="#1b1b1b" stroke="#777" stroke-width=".8" /><path d="M11 18v3M16 18v3M21 18v3" stroke="#f2f2f2" stroke-width="2.600" /><path d="M7 20q-2 5 1 10" stroke="#bbb" fill="none" />`,
  },
  {
    label: "Game",
    art: svg`<rect x="0" y="0" width="32" height="32" fill="#f7e516" /><path d="M8 32C4 24 6 16 10 12 8 6 12 1 18 1c7 0 11 5 9 11 4 4 5 12 5 20z" fill="#5a4a3d" />
      <path d="M12 11c1 4 4 8 9 7 3-2 4-6 3-9z" fill="#c68d6c" /><path d="M10 9C10 2 20-1 26 5l1 5-6-3-8 4z" fill="#8c4a38" /><path d="M6 28l8-8 6 12H8z" fill="#383a3c" /><path d="M16 20l8-4 6 8-8 8z" fill="#84765f" />`,
    state: "running",
  },
];

const TOOL = {
  expand: svg`<path d="M1 14l9-9v5h6v8h-6v5z M33 14l-9-9v5h-6v8h6v5z" fill="#3aa0ee" stroke="#e6f4ff" stroke-width="1" />`,
  shrink: svg`<path d="M16.500 14l-7-9v5H1v8h8.500v5z M17.500 14l7-9v5H33v8h-8.500v5z" fill="#3aa0ee" stroke="#e6f4ff" stroke-width="1" />`,
  network: svg`<path d="M16 6h10v7" stroke="#666" stroke-width="1.500" fill="none" /><path d="M2 2l14-2-1.500 11L3 12.500z" fill="#cfd6df" /><path d="M3.500 3l11-1.500-1 8.500-9 1z" fill="#2d8eea" /><path d="M4 3.200l10-1.400-8 6z" fill="#8cc8fa" /><path d="M6 14l7-1v2l-6 1z" fill="#b9bec4" />
    <path d="M17 15l14-2-1.500 11L18 25.500z" fill="#cfd6df" /><path d="M18.500 16l11-1.500-1 8.500-9 1z" fill="#2d8eea" /><path d="M19 16.200l10-1.400-8 6z" fill="#8cc8fa" /><path d="M21 27l7-1v2l-6 1z" fill="#b9bec4" />`,
  clock: svg`<circle cx="17" cy="14" r="14.500" fill="#fafafa" /><g stroke="#111" stroke-width="1.600"><path d="M17 1v3.500M17 23.500V27M4 14h3.500M26.500 14H30M23.500 2.700l-1.500 2.600M10.500 25.300l1.500-2.600M28.300 7.500l-2.600 1.500M5.700 20.500l2.600-1.500M10.500 2.700l1.500 2.600M23.500 25.300l-1.500-2.600M5.700 7.500l2.600 1.500M28.300 20.500l-2.600-1.500" /></g><path d="M18 5l-1.500 9.500H25" fill="none" stroke="#000" stroke-width="2" />`,
  log: svg`<path d="M6 0h14l7 6v22H6z" fill="#f6f6f4" /><path d="M20 0v6h7z" fill="#c9c9c9" /><path d="M9 6h10M9 9h14M9 12h14M9 15h14M9 18h14M9 21h10M9 24h9M13 6v18M18 6v18" stroke="#b4b4b4" stroke-width=".9" fill="none" />
    <path d="M23.500 17h4v4.500H32v4h-4.500V30h-4v-4.500H19v-4h4.500z" fill="#a6d64b" stroke="#5f8f1d" stroke-width=".8" />`,
  gear: svg`<g fill="#c4c6c8"><circle cx="17" cy="14" r="11" /><path d="M14.500-1h5l1 5h-7zM14.500 29h5l1-5h-7zM2 11.500v5l5 1v-7zM32 11.500v5l-5 1v-7zM4.600 5.100l3.500-3.500 4.300 2.800-5 5zM29.400 22.900l-3.500 3.500-4.300-2.800 5-5zM4.600 22.900l3.500 3.500 4.300-2.800-5-5zM29.400 5.100l-3.500-3.500-4.300 2.800 5 5z" /></g>
    <circle cx="17" cy="14" r="7.500" fill="#8a8d90" /><circle cx="17" cy="14" r="5.500" fill="#1a1a1a" />`,
  close: svg`<path d="M10.500 3L17 9 23.500 3 28 7.500 21.500 14l6.500 6.500-4.500 4.500L17 19l-6.500 6L6 20.500l6.500-6.500L6 7.500z" fill="#4aaee8" />`,
};

const TRAY: { label: string; art: TemplateResult }[] = [
  {
    label: "Fan control",
    art: svg`<g fill="#fff"><path d="M16 16C11 13 11 4 16 3c5-.8 8 3 6 6-1.500 2.500-5 3-6 7z" /><path d="M16 16c3-5 12-5 13 0 .8 5-3 8-6 6-2.500-1.500-3-5-7-6z" /><path d="M16 16c5 3 5 12 0 13-5 .8-8-3-6-6 1.500-2.500 5-3 6-7z" /><path d="M16 16c-3 5-12 5-13 0-.8-5 3-8 6-6 2.500 1.500 3 5 7 6z" /></g>`,
  },
  { label: "HWiNFO", art: hwinfoMark },
  {
    label: "AMD",
    art: svg`<rect width="32" height="32" fill="#e4002b" /><path d="M8 8h16v16l-4.500-4.500v-7h-7zM12 14v6h6l-4 4H8v-6z" fill="#fff" />`,
  },
  { label: "S Manager", art: sMark },
  {
    label: "Volume",
    art: svg`<g fill="none" stroke="#fff" stroke-width="2"><path d="M2 12h5l7-6v20l-7-6H2zM19 12q3 4 0 8M23 9q5 7 0 14M27 6q7 10 0 20" /></g>`,
  },
  {
    label: "Network",
    art: svg`<g fill="none" stroke="#fff" stroke-width="2"><path d="M22 3H1v22h22v-8M7 30h13M10 25v5M17 25v5M24 1h7v8h-7zM27.500 9v17q0 3-4 3" /></g>`,
  },
];

/* -------------------------------------------------------- sensor panel -- */
@customElement("sensor-panel")
export class SensorPanel extends LitElement {
  @property({ attribute: false }) sections: Section[] = [];
  @property({ type: Number }) sensorWidth = 181;

  static styles = css`
    :host {
      display: flex;
      flex-direction: column;
      min-width: 0;
      border: 1px solid #353535;
      background: #000;
    }
    table {
      flex: 1;
      width: 100%;
      table-layout: fixed;
      border-collapse: separate;
      border-spacing: 0;
    }
    .value-col {
      width: 74px;
    }
    th,
    td {
      padding: 0;
      font-weight: 400;
    }
    thead th {
      height: 15px;
      line-height: 12px;
      vertical-align: top;
      background: #191919;
      border-bottom: 1px solid #3c3c3c;
      text-align: right;
      padding-right: 6px;
    }
    thead th + th {
      border-left: 1px solid #3c3c3c;
    }
    thead .sensor {
      text-align: left;
      padding: 0 0 0 8px;
    }
    thead .spare {
      padding: 0;
    }
    tbody tr {
      height: 17px;
    }
    tbody .rest {
      height: auto;
    }
    td {
      border-left: 1px solid #20242a;
      padding-left: 1px;
    }
    tbody th {
      text-align: left;
    }
    .value {
      display: block;
      height: 16px;
      line-height: 18px;
      padding-right: 6px;
      text-align: right;
      white-space: nowrap;
      border-bottom: 1px solid #181a1c;
    }
    .value.changed {
      background: #152138;
    }
    .value.alert {
      color: #e01b1b;
    }
    .name {
      display: flex;
      height: 17px;
    }
    .gutter {
      flex: none;
      width: 23px;
      display: flex;
      justify-content: flex-end;
      align-items: center;
    }
    .gutter.deep {
      width: 39px;
    }
    .toggle {
      display: flex;
      width: 13px;
      height: 13px;
      margin-right: 4px;
      padding: 0;
      border: 0;
      background: none;
    }
    .line {
      flex: 1;
      min-width: 0;
      display: flex;
      align-items: center;
      gap: 2px;
      height: 16px;
      line-height: 15px;
      border-bottom: 1px solid #181a1c;
      white-space: nowrap;
    }
    .icon {
      flex: none;
      width: 16px;
      height: 16px;
      display: flex;
      align-items: center;
      justify-content: center;
    }
    .title {
      position: relative;
      z-index: 1;
      background: #000;
      font-weight: 700;
    }
  `;

  private toggle(open: boolean) {
    return html`<button class="toggle" type="button" aria-label=${open ? "Collapse" : "Expand"}>${chevron(open)}</button>`;
  }

  private blankCells() {
    return [0, 1, 2, 3].map(() => html`<td><span class="value"></span></td>`);
  }

  private blankRow() {
    return html`<tr>
      <th><div class="name"><span class="gutter deep"></span><span class="line"></span></div></th>
      ${this.blankCells()}
      <td></td>
    </tr>`;
  }

  private titleRow(title: string) {
    return html`<tr>
      <th scope="rowgroup">
        <div class="name">
          <span class="gutter">${this.toggle(true)}</span>
          <span class="line"><span class="icon">${ROW_ICONS.chip}</span><span class="title">${title}</span></span>
        </div>
      </th>
      ${this.blankCells()}
      <td></td>
    </tr>`;
  }

  private readingRow(r: Reading) {
    return html`<tr>
      <th scope="row">
        <div class="name">
          <span class=${classMap({ gutter: true, deep: r.nested })}>${r.group ? this.toggle(r.group === "open") : nothing}</span>
          <span class="line"><span class="icon">${ROW_ICONS[r.icon]}</span><span>${r.name}</span></span>
        </div>
      </th>
      ${r.values.map(
        (v, i) =>
          html`<td><span class=${classMap({ value: true, changed: i === 0 && r.changed, alert: i === 2 && r.alert })}>${v}</span></td>`
      )}
      <td></td>
    </tr>`;
  }

  render() {
    return html`<table>
      <colgroup>
        <col style="width:${this.sensorWidth}px" />
        <col class="value-col" /><col class="value-col" /><col class="value-col" /><col class="value-col" />
        <col />
      </colgroup>
      <thead>
        <tr>
          <th class="sensor" scope="col">Sensor</th>
          <th scope="col">Current</th>
          <th scope="col">Minimum</th>
          <th scope="col">Maximum</th>
          <th scope="col">Average</th>
          <th class="spare"></th>
        </tr>
      </thead>
      <tbody>
        ${this.sections.map(
          (s, i) => html`${i > 0 ? this.blankRow() : nothing}${s.title ? this.titleRow(s.title) : nothing}${s.readings.map((r) => this.readingRow(r))}`
        )}
        <tr class="rest"><th></th><td></td><td></td><td></td><td></td><td></td></tr>
      </tbody>
    </table>`;
  }
}

/* ---------------------------------------------------------------- page -- */
@customElement("app-root")
export class AppRoot extends LitElement {
  static styles = css`
    :host {
      display: flex;
      flex-direction: column;
      min-height: 100vh;
      background: #000;
      color: #fff;
      font-family: "Open Sans", "Noto Sans", sans-serif;
      font-size: 9px;
    }
    button {
      font: inherit;
      color: inherit;
      padding: 0;
      border: 0;
      background: none;
    }
    .titlebar {
      display: flex;
      align-items: center;
      height: 23px;
      padding: 0 2px;
      gap: 5px;
      background: linear-gradient(90deg, #1d201b, #1e1e1b 50%, #211f1b);
    }
    .caption {
      flex: 1;
      margin: 0;
      font-size: 12px;
      font-weight: 400;
      line-height: 18px;
    }
    .window-buttons {
      display: flex;
      align-self: flex-start;
    }
    .window-buttons button {
      display: flex;
      justify-content: center;
      align-items: center;
      width: 46px;
      height: 20px;
    }
    .panels {
      flex: 1;
      display: grid;
      grid-template-columns: repeat(5, minmax(0, 1fr));
    }
    .panels sensor-panel.focused {
      padding: 1px 1px 0 1px;
    }
    .toolbar {
      display: flex;
      justify-content: space-between;
      height: 35px;
      padding: 7px 12px 13px 1px;
    }
    .tools {
      display: flex;
      align-items: center;
      gap: 4px;
    }
    .tools.left {
      gap: 2px;
    }
    .tool {
      display: flex;
      align-items: center;
      justify-content: center;
      width: 42px;
      height: 35px;
      border: 1px solid #8c8c8c;
      border-radius: 3px;
      background: linear-gradient(#454545, #1c1c1c 50%, #000 60%);
    }
    .tool.default {
      border-color: #f2f2f2;
    }
    .uptime {
      margin: 0 -2px 0 50px;
    }
    .taskbar {
      display: flex;
      justify-content: space-between;
      height: 55px;
      padding-left: 3px;
      border-top: 1px solid #3d3936;
      background: linear-gradient(90deg, #351d13 0, #2a2019 7%, #242321 12%, #232120 22%, #2c2018 28%, #262120 34%, #2f2116 46%, #29211d 60%, #28211e 85%, #3a1d14 92%, #341e13 100%);
    }
    .apps {
      display: flex;
    }
    .app {
      display: flex;
      align-items: center;
      justify-content: center;
      position: relative;
      width: 62px;
      height: 48px;
      margin-top: 3px;
      border-radius: 5px;
    }
    .app.active {
      background: #564a43;
    }
    .app.active::after,
    .app.running::after {
      content: "";
      position: absolute;
      bottom: 1px;
      width: 7px;
      height: 4px;
      border-radius: 2px;
      background: #9a9a9a;
    }
    .app.active::after {
      width: 34px;
      background: #5c5c5e;
    }
    .tray {
      display: flex;
      align-items: center;
      gap: 12px;
      padding-right: 19px;
      font-size: 11px;
    }
    .tray button {
      display: flex;
    }
    .clock {
      margin: 0 -5px 0 2px;
      text-align: right;
      font-size: 10px;
      line-height: 18px;
    }
    .clock time {
      display: block;
    }
    .lang {
      margin-left: 3px;
    }
  `;

  private tool(label: string, art: TemplateResult, extra = "") {
    return html`<button class="tool ${extra}" type="button" aria-label=${label}>
      <svg width="34" height="30" viewBox="0 -1 34 30">${art}</svg>
    </button>`;
  }

  render() {
    return html`
      <header class="titlebar">
        <svg width="16" height="14" viewBox="0 0 32 32" preserveAspectRatio="none">${hwinfoMark}</svg>
        <h1 class="caption">HWiNFO® 64 v8.24-5700 - Sensors Status</h1>
        <div class="window-buttons">
          <button type="button" aria-label="Minimize">
            <svg width="11" height="11" viewBox="0 0 11 11"><path d="M.5 5.500h10" stroke="#fff" /></svg>
          </button>
          <button type="button" aria-label="Restore">
            <svg width="11" height="11" viewBox="0 0 11 11" fill="none" stroke="#fff">
              <rect x="1" y="2.500" width="7.500" height="7.500" rx="1.500" /><path d="M3 .8h5a2 2 0 0 1 2 2v5.200" />
            </svg>
          </button>
          <button type="button" aria-label="Close">
            <svg width="11" height="11" viewBox="0 0 11 11"><path d="M.8 1l9.400 9.400M10.200 1L.8 10.400" stroke="#fff" /></svg>
          </button>
        </div>
      </header>
      <main class="panels">
        ${PANELS.map(
          (p, i) => html`<sensor-panel class=${i === 0 ? "focused" : ""} .sections=${p.sections} .sensorWidth=${p.width}></sensor-panel>`
        )}
      </main>
      <div class="toolbar">
        <div class="tools left">${this.tool("Expand columns", TOOL.expand)}${this.tool("Shrink columns", TOOL.shrink)}</div>
        <div class="tools">
          ${this.tool("Remote monitoring", TOOL.network)}
          <span class="uptime">2:28:30</span>
          ${this.tool("Reset timer", TOOL.clock)}${this.tool("Start logging", TOOL.log)}${this.tool("Settings", TOOL.gear)}${this.tool("Close sensors", TOOL.close, "default")}
        </div>
      </div>
      <footer class="taskbar">
        <div class="apps">
          ${APPS.map(
            (a) => html`<button class="app ${a.state ?? ""}" type="button" aria-label=${a.label}>
              <svg width="32" height="32" viewBox="0 0 32 32">${a.art}</svg>
            </button>`
          )}
        </div>
        <div class="tray">
          ${TRAY.map(
            (t) => html`<button type="button" aria-label=${t.label}><svg width="16" height="16" viewBox="0 0 32 32">${t.art}</svg></button>`
          )}
          <span class="lang">РУС</span>
          <div class="clock"><time>4:06</time><time>13.04.2025</time></div>
          <button type="button" aria-label="Notifications">
            <svg width="16" height="16" viewBox="0 0 16 16" fill="none" stroke="#fff">
              <path d="M2 12.500c1-1.500 1.500-3 1.500-5.500a4.500 4.500 0 0 1 9 0c0 2.500.5 4 1.500 5.500zM6 13a2 2 0 0 0 4 0" />
            </svg>
          </button>
        </div>
      </footer>
    `;
  }
}
